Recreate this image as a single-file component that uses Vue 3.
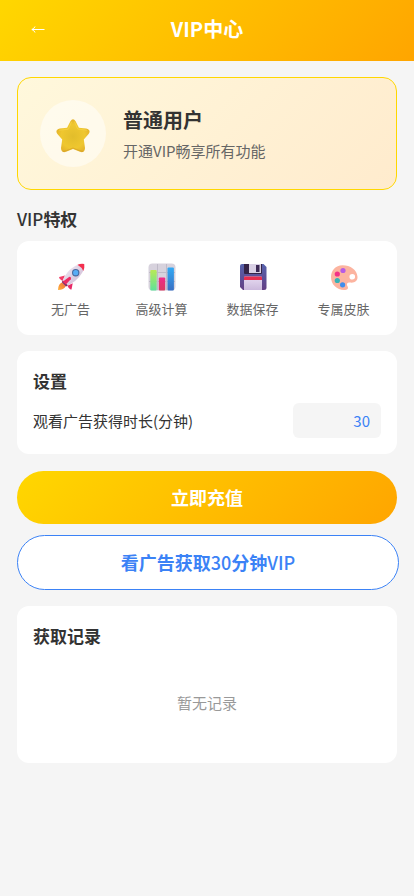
<template>
  <div class="page">
    <header class="navbar">
      <button class="back" type="button" aria-label="返回">
        <svg viewBox="0 0 14 10" width="14" height="10" fill="none" stroke="#fff">
          <path d="M1 5.5H13.5M4 2.5Q3 5 .8 5.5Q3 6 4 8.5" />
        </svg>
      </button>
      <h1 class="nav-title">VIP中心</h1>
    </header>

    <main class="content">
      <section class="user-card">
        <div class="avatar">
          <svg viewBox="0 0 36 36" width="36" height="36">
            <defs>
              <radialGradient id="starFill" cx="50%" cy="52%" r="55%">
                <stop offset="0" stop-color="#e2bd2b" />
                <stop offset=".65" stop-color="#efc72f" />
                <stop offset="1" stop-color="#e3b02a" />
              </radialGradient>
            </defs>
            <path
              d="M15.4 3.3Q18 -.6 20.6 3.3L23.9 9.8L31.2 10.6Q36.4 12 33.6 16L28.8 21.5L30 30Q29.8 35.3 25 33.8L18 30.9L11 33.8Q6.2 35.3 6 30L7.2 21.5L2.4 16Q-.4 12 4.8 10.6L12.1 9.8Z"
              fill="url(#starFill)"
            />
            <path d="M16.4 4.2L13.4 11.2L4.6 12.2M19.6 4L22.7 11L31.4 12.2" fill="none" stroke="#f5d03f" stroke-linecap="round" stroke-linejoin="round" />
            <path d="M8 33.4Q10 33.6 18 30Q26 33.6 28 33.4" fill="none" stroke="#cf9a28" stroke-linecap="round" opacity=".6" />
          </svg>
        </div>
        <div class="user-info">
          <div class="user-name">普通用户</div>
          <div class="user-desc">开通VIP畅享所有功能</div>
        </div>
      </section>

      <h2 class="section-title outer"><span class="latin">VIP</span>特权</h2>
      <section class="privileges">
        <div v-for="item in privileges" :key="item.icon" class="privilege">
          <svg v-if="item.icon === 'rocket'" viewBox="0 0 28 28" width="28" height="28">
            <defs>
              <linearGradient id="rocketBody" x1="0" y1="0" x2="1" y2="1">
                <stop offset="0" stop-color="#f5eff8" />
                <stop offset="1" stop-color="#c8b3cf" />
              </linearGradient>
              <linearGradient id="rocketFlame" x1="1" y1="0" x2="0" y2="1">
                <stop offset="0" stop-color="#f06a35" />
                <stop offset="1" stop-color="#ffb33d" />
              </linearGradient>
            </defs>
            <path d="M5 19.5Q1.2 20.7 1 27Q7 27 8.8 23Z" fill="url(#rocketFlame)" />
            <path d="M8 12.5L2.2 14Q1.5 15.5 5.5 18L7 15Z" fill="#f23e69" />
            <path d="M15.7 20.2L14.5 26.5Q12.8 27.2 10.4 22.8Z" fill="#e72a67" />
            <path d="M5 19Q9 8 18.5 2.8Q22.7.5 27.2 1Q27.8 6 25 10Q20 18.5 9 23.2Z" fill="url(#rocketBody)" />
            <path d="M20.5 1.8Q24 .3 27.2 1Q27.8 4.6 26.3 8Q24.8 4.3 20.5 1.8Z" fill="#f32f4e" />
            <path d="M5.8 17.2L10.9 22.5L9 23.5L4.8 19.2Z" fill="#812d61" />
            <path d="M5.6 18.8L12.4 13.8Q14.6 14.2 13.8 16.3L8.8 21.6Z" fill="#ec2b63" />
            <circle cx="18.7" cy="9.7" r="3.7" fill="#47699d" />
            <circle cx="18.7" cy="9.7" r="2.6" fill="#58adf5" />
          </svg>

          <svg v-else-if="item.icon === 'chart'" viewBox="0 0 28 28" width="28" height="28">
            <defs>
              <linearGradient id="barGreen" x1="0" y1="0" x2="0" y2="1">
                <stop offset="0" stop-color="#b8e957" />
                <stop offset="1" stop-color="#60e299" />
              </linearGradient>
              <linearGradient id="barPink" x1="0" y1="0" x2="0" y2="1">
                <stop offset="0" stop-color="#f02a8a" />
                <stop offset="1" stop-color="#d83b61" />
              </linearGradient>
              <linearGradient id="barBlue" x1="0" y1="0" x2="0" y2="1">
                <stop offset="0" stop-color="#32a9f4" />
                <stop offset="1" stop-color="#3970c4" />
              </linearGradient>
            </defs>
            <rect x=".5" y=".5" width="27" height="27" rx="4" fill="#d7d2dd" />
            <path d="M1 9.5H27M1 18.5H27M9.5 1V27M18.5 1V27" stroke="#bfbac8" />
            <rect x="2.3" y="7" width="6.4" height="20.4" rx="1" fill="url(#barGreen)" />
            <rect x="10.8" y="14.5" width="6.4" height="12.9" rx="1" fill="url(#barPink)" />
            <rect x="19.5" y="4.5" width="6.4" height="22.9" rx="1" fill="url(#barBlue)" />
          </svg>

          <svg v-else-if="item.icon === 'floppy'" viewBox="0 0 28 28" width="28" height="28">
            <defs>
              <linearGradient id="diskBody" x1="0" y1="0" x2="0" y2="1">
                <stop offset="0" stop-color="#5663ad" />
                <stop offset="1" stop-color="#643f84" />
              </linearGradient>
              <linearGradient id="diskLabel" x1="0" y1="0" x2="0" y2="1">
                <stop offset="0" stop-color="#e8dcf2" />
                <stop offset="1" stop-color="#cbb9dc" />
              </linearGradient>
            </defs>
            <path d="M3 1H24.5L27.5 4V24.5Q27.5 27 25 27H4L1 24V3Q1 1 3 1Z" fill="url(#diskBody)" />
            <path d="M5 1H23V10Q23 11 22 11H6Q5 11 5 10Z" fill="#352447" />
            <path d="M10 1H22V10H10Z" fill="#d9d0e5" />
            <path d="M17 2H20.5V9H17Z" fill="#3a2854" />
            <path d="M5 14.5Q5 13.5 6 13.5H22Q23 13.5 23 14.5V27H5Z" fill="url(#diskLabel)" />
            <path d="M5 14.5Q5 13.5 6 13.5H22Q23 13.5 23 14.5V17H5Z" fill="#e82d4e" />
          </svg>

          <svg v-else viewBox="0 0 28 28" width="28" height="28">
            <path
              d="M12.5 2.3C5.5 2.3 1 7.8 1 14C1 21.5 7 27 14 27C17.5 27 18.8 25.6 17.5 23.3C16 20.5 17.8 19.3 20.3 19.6C24.8 20 27.8 18 27.5 13.8C27 7 20.5 2.3 12.5 2.3ZM22.3 11A2.8 2.8 0 1 1 22.2 16.6A2.8 2.8 0 1 1 22.3 11Z"
              fill="#fcb4a0" fill-rule="evenodd"
            />
            <circle cx="13" cy="7.5" r="2.6" fill="#b65be5" />
            <circle cx="7.3" cy="11" r="2.6" fill="#f23187" />
            <circle cx="7.3" cy="17.5" r="2.6" fill="#39b1b5" />
            <circle cx="12.6" cy="21.8" r="2.6" fill="#408eed" />
          </svg>
          <span class="privilege-label">{{ item.label }}</span>
        </div>
      </section>

      <section class="card settings">
        <h2 class="section-title">设置</h2>
        <div class="setting-row">
          <label for="duration">观看广告获得时长(分钟)</label>
          <input id="duration" v-model="duration" class="duration" type="text" inputmode="numeric" />
        </div>
      </section>

      <div class="actions">
        <button class="btn btn-primary" type="button">立即充值</button>
        <button class="btn btn-outline" type="button">
          看广告获取<span class="latin">{{ duration }}</span>分钟<span class="latin">VIP</span>
        </button>
      </div>

      <section class="card">
        <h2 class="section-title">获取记录</h2>
        <div class="empty">暂无记录</div>
      </section>
    </main>
  </div>
</template>

<script setup>
import { ref } from 'vue'

const duration = ref('30')

const privileges = [
  { icon: 'rocket', label: '无广告' },
  { icon: 'chart', label: '高级计算' },
  { icon: 'floppy', label: '数据保存' },
  { icon: 'palette', label: '专属皮肤' }
]
</script>

<style>
body { background: #f5f5f5; }
</style>

<style scoped>
.page {
  min-height: 100vh; background: #f5f5f5; color: #333;
  font-family: "Noto Sans CJK SC", "Noto Sans", sans-serif;
  font-size: 15px; line-height: 22px;
}
.page * { box-sizing: border-box; }
button, input { font-family: inherit; }
h1, h2 { margin: 0; }
svg { display: block; }

.navbar {
  display: grid; grid-template-columns: 1fr auto 1fr; align-items: center;
  padding: 14px 15px 18px; background: linear-gradient(135deg, #ffd700, #ffa500);
}
.back {
  justify-self: start; padding: 8px 16px; border: 0;
  background: none; cursor: pointer;
}
.nav-title { font-size: 20px; line-height: 29px; font-weight: 700; color: #fff; }

.content { padding: 16px 17px; }

.user-card {
  display: flex; align-items: center; gap: 17px; padding: 22px;
  border: 1px solid #ffd700; border-radius: 14px;
  background: linear-gradient(135deg, #fff8dc, #ffebcd);
}
.avatar {
  display: flex; align-items: center; justify-content: center;
  width: 66px; height: 67px; padding-top: 4px; border-radius: 50%;
  background: rgba(255, 255, 255, 0.5);
}
.user-name { font-size: 20px; line-height: 30px; font-weight: 700; margin-bottom: 5px; }
.user-desc { color: #666; }

.section-title { font-size: 17px; line-height: 26px; font-weight: 700; padding-top: 1px; margin-bottom: 9px; }
.section-title.outer { margin: 15px 0 9px; }
.latin { font-weight: 500; }

.privileges {
  display: grid; grid-template-columns: repeat(4, 1fr);
  padding: 22px 8px 15px; margin-bottom: 16px;
  background: #fff; border-radius: 12px;
}
.privilege { display: flex; flex-direction: column; align-items: center; gap: 7px; }
.privilege-label { font-size: 13px; color: #666; }

.card { padding: 16px; background: #fff; border-radius: 12px; }
.setting-row { display: flex; align-items: center; justify-content: space-between; }
.duration {
  width: 88px; height: 35px; padding: 0 11px; border: 0; border-radius: 6px;
  background: #f5f5f5; color: #3b82f6; font-size: 15px; text-align: right;
}

.actions { display: flex; flex-direction: column; gap: 11px; margin: 17px 0 16px; }
.btn {
  box-sizing: content-box; width: 100%; padding: 13px 0; border: 0;
  border-radius: 28px; font-size: 18px; line-height: 27px; font-weight: 700; cursor: pointer;
}
.btn-primary { color: #fff; background: linear-gradient(135deg, #ffd700, #ffa500); }
/* the outline sits outside the full-width box */
.btn-outline { color: #3b82f6; background: #fff; border: 1px solid #3b82f6; }

.empty { padding: 34px 0 33px; text-align: center; color: #999; }
</style>
